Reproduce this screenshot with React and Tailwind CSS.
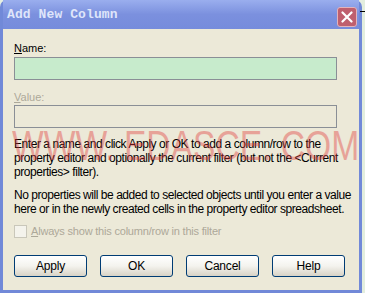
import React from 'react';

const sans = { fontFamily: '"Liberation Sans", Arial, sans-serif' };

function XpButton({ children }) {
  return (
    <button className="w-[73px] h-[22px] rounded-[3px] border border-[#003c74] bg-gradient-to-b from-[#ffffff] via-[#f4f3ee] to-[#d8d3c6] text-[12px] text-black leading-none tracking-[-0.2px]">
      {children}
    </button>
  );
}

export default function App() {
  return (
    <div className="relative w-[365px] h-[293px] flex bg-[#e6efe2] overflow-hidden" style={sans}>
      {/* window frame */}
      <div className="w-[362px] h-full flex flex-col rounded-t-[7px] bg-[#7189d8] px-[3px] pb-[3px]">
        {/* title bar */}
        <div className="h-[29px] flex items-center justify-between pl-[4px] pr-[2px] bg-gradient-to-b from-[#9aaeee] via-[#7b90de] to-[#768cdc]">
          <span
            className="text-[13px] font-bold text-[#dfe5fa] tracking-[0.1px]"
            style={{ fontFamily: '"Liberation Mono", "Courier New", monospace' }}
          >
            Add New Column
          </span>
          <div className="w-[20px] h-[20px] rounded-[3px] border border-[#e3b3bb] bg-[#bf5f6e] flex items-center justify-center mt-[4px]">
            <svg width="12" height="12" viewBox="0 0 12 12">
              <path d="M1.5 1.5 L10.5 10.5 M10.5 1.5 L1.5 10.5" stroke="#ffffff" strokeWidth="2.2" strokeLinecap="round" />
            </svg>
          </div>
        </div>

        {/* body */}
        <div className="flex-1 bg-[#ece9d8] flex flex-col pl-[11px] pt-[13px]">
          <div className="text-[11px] leading-[13px] text-black">
            <span className="underline">N</span>ame:
          </div>
          <div className="mt-[2px] w-[323px] h-[23px] border border-[#8a8f96] bg-[#c7ebcc]" />

          <div className="mt-[11px] text-[11px] leading-[13px] text-[#aca899]">
            <span className="underline">V</span>alue:
          </div>
          <div className="mt-[1px] w-[323px] h-[23px] border border-[#8a8f96] bg-[#ece9d8]" />

          <p className="mt-[9px] w-[340px] text-[12px] leading-[14px] text-black tracking-[-0.45px]">
            Enter a name and click Apply or OK to add a column/row to the property editor and optionally the current filter (but not the &lt;Current properties&gt; filter).
          </p>
          <p className="mt-[9px] w-[340px] text-[12px] leading-[14px] text-black tracking-[-0.45px]">
            No properties will be added to selected objects until you enter a value here or in the newly created cells in the property editor spreadsheet.
          </p>

          <div className="mt-[9px] flex items-center gap-[4px]">
            <div className="w-[13px] h-[13px] border border-[#c9c7ba] bg-[#f4f3ec]" />
            <span className="text-[11px] leading-[13px] text-[#aca899] tracking-[-0.2px]">
              <span className="underline">A</span>lways show this column/row in this filter
            </span>
          </div>

          <div className="mt-[17px] flex gap-[13px]">
            <XpButton>Apply</XpButton>
            <XpButton>OK</XpButton>
            <XpButton>Cancel</XpButton>
            <XpButton>Help</XpButton>
          </div>
        </div>
      </div>

      {/* desktop sliver to the right */}
      <div className="flex-1 bg-[#e3eede]" />
      <div className="absolute right-0 top-[11px] w-[5px] h-[1px] bg-black" />

      {/* watermark */}
      <div
        className="absolute left-[12px] top-[125px] text-[42px] leading-none text-[#e03a3a] opacity-40 origin-left scale-x-[0.8] whitespace-nowrap pointer-events-none"
        style={sans}
      >
        WWW. EDASCE. COM
      </div>
    </div>
  );
}
